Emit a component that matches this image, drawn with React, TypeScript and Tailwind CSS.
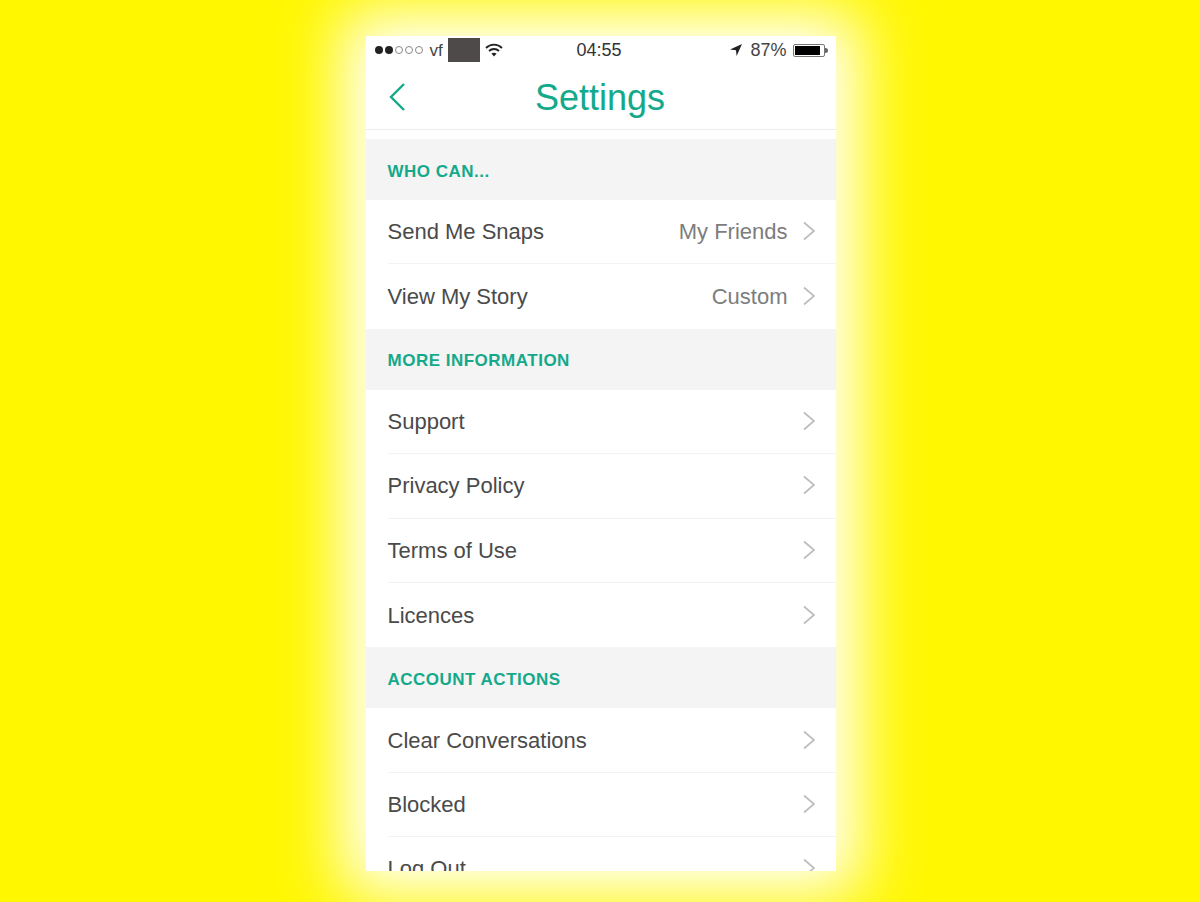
import React from 'react';

const font = { fontFamily: '"Liberation Sans", Arial, sans-serif' };

const Chevron: React.FC = () => (
  <svg width="14" height="20" viewBox="0 0 14 20" fill="none" className="shrink-0 mt-[-1px]">
    <path d="M2 1.5 L12 10 L2 18.5" stroke="#bdbdbd" strokeWidth="1.7" />
  </svg>
);

const SectionHeader: React.FC<{ title: string }> = ({ title }) => (
  <div className="h-[61px] bg-[#f4f4f4] flex items-center pl-[22px] pt-[3px] text-[17px] tracking-[0.5px] font-bold text-[#14a98a] leading-none">
    {title}
  </div>
);

const Row: React.FC<{ label: string; value?: string; last?: boolean }> = ({ label, value, last }) => (
  <div className="h-[64.4px] pl-[22px]">
    <div className={`h-full flex items-center pr-[20px] ${last ? '' : 'border-b border-[#f3f3f3]'}`}>
      <span className="text-[22px] text-[#4a4a4a] flex-1 leading-none pt-[1px]">{label}</span>
      {value && <span className="text-[22px] text-[#7d7d7d] mr-[14px] leading-none pt-[1px]">{value}</span>}
      <Chevron />
    </div>
  </div>
);

const StatusBar: React.FC = () => (
  <div className="h-[28px] flex items-center relative pl-[9px] pr-[8px] text-[#222]">
    <div className="flex items-center gap-[2px]">
      <span className="w-[8px] h-[8px] rounded-full bg-[#222]" />
      <span className="w-[8px] h-[8px] rounded-full bg-[#222]" />
      <span className="w-[8px] h-[8px] rounded-full border border-[#888]" />
      <span className="w-[8px] h-[8px] rounded-full border border-[#888]" />
      <span className="w-[8px] h-[8px] rounded-full border border-[#888]" />
    </div>
    <span className="ml-[7px] text-[17px] text-[#444] leading-none">vf</span>
    <div className="ml-[5px] w-[32px] h-[24px] bg-[#4f4a4a]" />
    <svg width="18" height="14" viewBox="0 0 18 14" fill="none" className="ml-[5px]">
      <path d="M1 5 C5.5 0.5 12.5 0.5 17 5" stroke="#222" strokeWidth="1.8" />
      <path d="M4 8 C6.8 5.3 11.2 5.3 14 8" stroke="#222" strokeWidth="1.8" />
      <path d="M9 13.5 L6.4 10.6 C8 9.4 10 9.4 11.6 10.6 Z" fill="#222" />
    </svg>
    <span className="absolute left-[211px] text-[18px] text-[#333] leading-none">04:55</span>
    <div className="ml-auto flex items-center">
      <svg width="14" height="14" viewBox="0 0 14 14" className="mr-[7px]">
        <path d="M13 1 L1 6.5 L7 7.2 L7.6 13 Z" fill="#222" />
      </svg>
      <span className="text-[18px] text-[#444] leading-none mr-[6px]">87%</span>
      <div className="w-[32px] h-[13px] border border-[#777] p-[1px] rounded-[2px]">
        <div className="h-full w-[90%] bg-black" />
      </div>
      <span className="w-[3px] h-[5px] bg-[#666] rounded-r-sm" />
    </div>
  </div>
);

const NavBar: React.FC = () => (
  <div className="h-[66px] relative flex items-center justify-center pt-[2px] border-b border-[#ececec]">
    <svg width="20" height="30" viewBox="0 0 20 30" fill="none" className="absolute left-[22px] top-[18px]">
      <path d="M16 2 L3 15 L16 28" stroke="#14a98a" strokeWidth="2.4" />
    </svg>
    <span className="text-[36px] text-[#14a98a] leading-none font-light ml-[-1px]">Settings</span>
  </div>
);

export default function App() {
  return (
    <div style={font} className="h-[902px] w-full overflow-hidden bg-[#fff700] flex justify-center pt-[36px] pl-[1px]">
      <div className="w-[470px] h-[835px] bg-white overflow-hidden shadow-[0_0_60px_24px_#ffffff]">
        <StatusBar />
        <NavBar />
        <div className="h-[9px]" />
        <SectionHeader title="WHO CAN..." />
        <Row label="Send Me Snaps" value="My Friends" />
        <Row label="View My Story" value="Custom" last />
        <SectionHeader title="MORE INFORMATION" />
        <Row label="Support" />
        <Row label="Privacy Policy" />
        <Row label="Terms of Use" />
        <Row label="Licences" last />
        <SectionHeader title="ACCOUNT ACTIONS" />
        <Row label="Clear Conversations" />
        <Row label="Blocked" />
        <Row label="Log Out" />
      </div>
    </div>
  );
}
